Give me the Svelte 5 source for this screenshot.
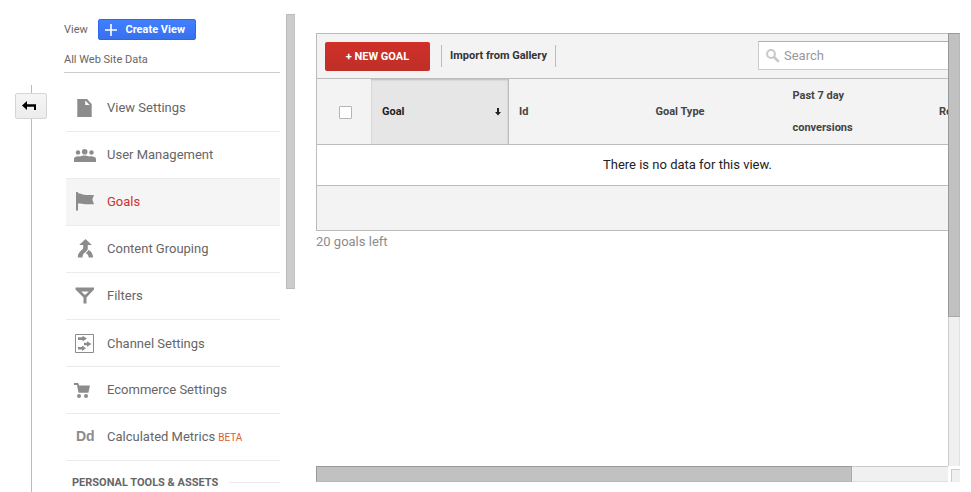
<script>
  const items = [
    { label: 'View Settings', icon: 'file' },
    { label: 'User Management', icon: 'users' },
    { label: 'Goals', icon: 'flag', active: true },
    { label: 'Content Grouping', icon: 'merge' },
    { label: 'Filters', icon: 'filter' },
    { label: 'Channel Settings', icon: 'channel' },
    { label: 'Ecommerce Settings', icon: 'cart' },
    { label: 'Calculated Metrics', icon: 'dd', tag: 'BETA' }
  ];
</script>

<div class="page">
  <div class="rail">
    <button class="back" aria-label="Back">
      <svg width="14" height="10" viewBox="0 0 14 10"><path d="M0 4.500 5 0v3.300h9V9h-2V5.700H5V9z" fill="#000" /></svg>
    </button>
  </div>

  <nav class="side">
    <div class="viewrow">
      <span class="small">View</span>
      <button class="create">
        <svg width="12" height="12" viewBox="0 0 12 12"><path d="M5.200 0h1.600v5.200H12v1.600H6.800V12H5.200V6.800H0V5.200h5.200z" fill="#fff" /></svg>
        <span>Create View</span>
      </button>
    </div>
    <div class="site small">All Web Site Data</div>
    <ul>
      {#each items as item}
        <li class:active={item.active} class:low={item.icon === 'channel'}>
          <span class="icon">
            {#if item.icon === 'dd'}
              <b class="dd">Dd</b>
            {:else}
              <svg width="24" height="24" viewBox="0 0 24 24" fill="#8c8c8c">
                {#if item.icon === 'file'}
                  <path fill-rule="evenodd" d="M5.300 3h9.700L19.700 8V21H5.300zM13.200 4.500v4.500h4.500z" />
                {:else if item.icon === 'users'}
                  <circle cx="6" cy="9.500" r="2.200" /><circle cx="12.700" cy="8.700" r="2.800" /><circle cx="19.500" cy="9.500" r="2.200" />
                  <path d="M2 19v-3.200c0-2.200 3.500-3.100 6-2.300 2.500-1.400 6.500-1.400 9 0 2.500-.8 7 .1 7 2.300V19z" />
                {:else if item.icon === 'flag'}
                  <path d="M4 2h2v1.300c3 .2 5 1.700 8 1.700h8l-1.700 4.500 1.700 4.700h-7c-3 0-5-1.200-9-.7V20.500H4z" />
                {:else if item.icon === 'merge'}
                  <path d="m13.500 2 6.300 6h-4v3.500c0 1.500-.8 2.300-2 3.300-2 1.600-3.300 2.700-3.300 5.700H5.800c0-4 1.500-5.500 3.700-7.300 1.200-1 1.700-1.400 1.700-2.700V8h-4z" />
                  <path d="m16.500 12.800c2.700 1.700 4.500 4 4.500 7.700h-4.300c0-2-1.200-3.200-3-4.400 1.500-1 2.500-2 2.800-3.300z" />
                {:else if item.icon === 'filter'}
                  <path fill-rule="evenodd" d="M3.500 3.500H22V5.500L14.500 13.500v6h-3v-6L3.500 5.500zM9.300 7.500l3 3h1.400l3-3z" />
                {:else if item.icon === 'channel'}
                  <path fill="none" stroke="#8c8c8c" d="M3.500 3.500h18v18h-18z" />
                  <path d="M6 6.300h4.500V4.800L15 7.600l-4.500 2.800V8.900H6zM12 11.700h3v-1.500l4.500 2.800-4.500 2.800V14.300h-3zM6 15.900h4v-1.500l4 2.800-4 2.800V18.500H6z" />
                {:else if item.icon === 'cart'}
                  <path d="M2 5h4.300l.7 2.500h11l-1.600 7.200H6.500L5 7H2z" /><circle cx="7" cy="18" r="2" /><circle cx="14" cy="18" r="2" />
                {/if}
              </svg>
            {/if}
          </span>
          <span class="label">{item.label}</span>{#if item.tag}<span class="tag">{item.tag}</span>{/if}
        </li>
      {/each}
    </ul>
    <div class="section"><b>PERSONAL TOOLS &amp; ASSETS</b><i></i></div>
  </nav>

  <div class="sidethumb"></div>

  <main>
    <div class="upper">
      <div class="content">
        <div class="table">
          <div class="toolbar">
            <button class="new">+ NEW GOAL</button>
            <div class="import">Import from Gallery</div>
            <div class="search">
              <svg width="14" height="14" viewBox="0 0 14 14" fill="none" stroke="#c8c8c8"><circle cx="5" cy="5" r="3.900" stroke-width="2" /><path d="m8 8 4.800 4.800" stroke-width="2.600" /></svg>
              <span>Search</span>
            </div>
          </div>
          <div class="head">
            <div class="check"><span></span></div>
            <div class="sorted"><span>Goal</span>
              <svg width="6" height="8" viewBox="0 0 6 8"><path d="M2 0h2v4h2L3 7.500 0 4h2z" fill="#222" /></svg>
            </div>
            <div class="col id">Id</div>
            <div class="col">Goal Type</div>
            <div class="col conv">Past 7 day<br />conversions</div>
            <div class="col">Re</div>
          </div>
          <div class="empty">There is no data for this view.</div>
          <div class="foot"></div>
        </div>
        <div class="left">20 goals left</div>
      </div>
      <div class="vbar"><div></div></div>
    </div>
    <div class="lower">
      <div class="hbar"><div></div></div>
      <div class="corner"></div>
    </div>
  </main>
</div>

<style>
  :global(body) { background: #fff; overflow: hidden; }
  * { box-sizing: border-box; }
  .page { display: flex; width: 971px; height: 492px; overflow: hidden; font-family: Roboto, "Liberation Sans", sans-serif; white-space: nowrap; color: #666; }
  button { font-family: inherit; padding: 0; border: 0; }
  .rail { width: 64px; height: 407px; margin-top: 85px; flex: none; padding: 8px 0 0 15px; background: linear-gradient(#bbb, #bbb) 31px 0 / 1px 100% no-repeat; }
  .back { display: flex; align-items: center; padding: 0 0 1px 6px; width: 32px; height: 26px; background: linear-gradient(#f5f5f5, #ececec); border: 1px solid #d5d5d5; border-radius: 2px; }
  .side { width: 216px; flex: none; padding-top: 19px; }
  .viewrow { display: flex; align-items: center; height: 21px; }
  .small { font-size: 11px; }
  .viewrow .small { width: 34px; }
  .create { display: flex; align-items: center; gap: 8.500px; width: 98px; height: 21px; padding-left: 6px; background: linear-gradient(#4080ff, #3870ee); border: 1px solid #2f67e8; border-radius: 2px; color: #fff; font-size: 11px; font-weight: 700; }
  .site { height: 33px; line-height: 39px; border-bottom: 1px solid #ccc; }
  ul { list-style: none; margin: 12px 0 0 2px; padding: 0; }
  li { height: 47px; display: flex; align-items: center; border-bottom: 1px solid #ebebeb; font-size: 13px; }
  li.active { background: #f5f5f5; color: #d0312d; }
  .icon { width: 41px; height: 24px; padding-left: 6px; display: flex; align-items: center; }
  .label { margin-top: -2px; }
  .low .label { margin-top: 0; }
  .dd { color: #8c8c8c; font: 700 14px "Liberation Sans", sans-serif; padding: 0 0 2px 4px; }
  .tag { font-size: 10px; color: #d9602b; margin: 0 0 0 3px; }
  .section { display: flex; align-items: center; height: 43px; padding-left: 8px; font-size: 11px; }
  .section i { margin-left: 11px; height: 1px; flex: 1; background: #ebebeb; }
  .sidethumb { flex: none; width: 9px; height: 275px; margin: 14px 21px 0 6px; background: #ccc; border: 1px solid #bbb; border-right-color: #c4c4c4; }
  main { width: 644px; flex: none; padding-top: 33px; }
  .upper { display: flex; height: 433px; }
  .content { width: 632px; overflow: hidden; }
  .table { width: 800px; border: 1px solid #bcbcbc; background: #f3f3f3; }
  .toolbar { height: 45px; display: flex; padding: 8px 0 0 8px; border-bottom: 1px solid #bcbcbc; }
  .new { width: 105px; height: 29px; background: linear-gradient(#d03029, #bf2f27); border-radius: 2px; color: #fff; font-size: 11px; font-weight: 700; }
  .import { margin: 3px 0 0 11px; width: 115px; height: 22px; line-height: 21px; padding-left: 8px; color: #333; font-size: 11px; font-weight: 700; border: solid #bcbcbc; border-width: 0 1px; }
  .search { margin: -1px 0 0 202px; width: 240px; height: 29px; display: flex; align-items: center; gap: 4px; padding-left: 7px; background: #fff; border: 1px solid #ccc; border-top-color: #b0b0b0; font-size: 13px; color: #999; }
  .head { height: 66px; display: flex; align-items: center; border-bottom: 1px solid #bcbcbc; font-size: 11px; font-weight: 700; color: #444; }
  .check { width: 54px; padding-left: 22px; }
  .check span { display: block; width: 13px; height: 13px; background: #fff; border: 1px solid #b5b5b5; border-radius: 1px; margin-top: 2px; }
  .sorted { width: 138px; height: 65px; display: flex; align-items: center; justify-content: space-between; padding: 0 7px 0 11px; background: #e6e6e6; border-right: 1px solid #bcbcbc; box-shadow: inset 0 1px 2px #bbb; color: #222; }
  .col { width: 137px; padding-left: 10px; }
  .id { width: 136.500px; }
  .conv { width: 146.500px; line-height: 32px; }
  .empty { height: 41px; line-height: 39px; padding-left: 286px; background: #fff; border-bottom: 1px solid #bcbcbc; color: #222; font-size: 13px; }
  .foot { height: 44px; }
  .left { font-size: 13px; line-height: 22px; color: #8c8c8c; }
  .vbar { width: 12px; background: #f0f0f0; border: solid #ccc; border-width: 0 1px; border-right-color: #e0e0e0; }
  .vbar div { width: 12px; height: 284px; margin-left: -1px; background: #c1c1c1; border: 1px solid #999; border-right-color: #b8b8b8; border-bottom-color: #a8a8a8; }
  .lower { display: flex; height: 16px; }
  .hbar { width: 632px; background: #f0f0f0; border: solid #ccc; border-width: 1px 0; border-bottom-color: #e0e0e0; }
  .hbar div { width: 536px; height: 16px; margin-top: -1px; background: #c1c1c1; border: 1px solid #999; border-right-color: #a8a8a8; border-bottom-color: #b8b8b8; }
  .corner { width: 9px; height: 13px; margin: 3px 0 0 3px; background: #f0f0f0; border: solid #ccc; border-width: 1px 0 0 1px; }
</style>
